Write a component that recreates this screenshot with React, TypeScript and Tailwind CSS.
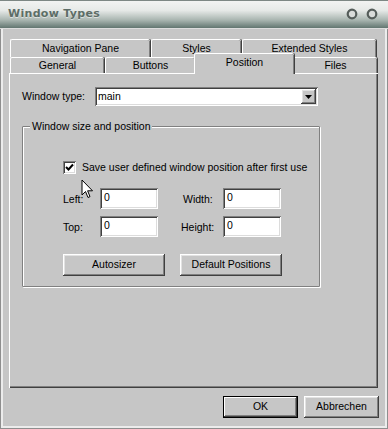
import React from "react";

const raised =
  "bg-[#c6c6c6] shadow-[inset_-1px_-1px_#404040,inset_1px_1px_#ffffff,inset_-2px_-2px_#808080,inset_2px_2px_#e2e2e2]";
const sunken =
  "bg-white shadow-[inset_1px_1px_#808080,inset_-1px_-1px_#ffffff,inset_2px_2px_#404040,inset_-2px_-2px_#dcdcdc]";

function Tab(props: { label: string; w: number; selected?: boolean }) {
  if (props.selected) {
    return (
      <div
        className="relative z-10 -mx-[2px] mb-[-1px] flex h-[21px] items-center justify-center rounded-t-[2px] border-t border-l border-white bg-[#c6c6c6] pb-[2px] shadow-[inset_-1px_0_#808080,1px_0_#404040]"
        style={{ width: props.w + 4 }}
      >
        {props.label}
      </div>
    );
  }
  return (
    <div
      className="flex h-full items-center justify-center rounded-t-[2px] border-t border-l border-white bg-[#c6c6c6] shadow-[inset_-1px_0_#808080,1px_0_#404040]"
      style={{ width: props.w - 1, marginRight: 1 }}
    >
      {props.label}
    </div>
  );
}

function Field(props: { label: string; labelW: number }) {
  return (
    <div className="flex h-[21px] items-center">
      <span className="pt-[2px]" style={{ width: props.labelW }}>
        {props.label}
      </span>
      <div className={`${sunken} h-[21px] w-[58px] pl-[4px] pt-[2px] leading-[14px]`}>0</div>
    </div>
  );
}

function Cursor() {
  return (
    <svg className="absolute left-[81px] top-[179px]" width="13" height="20" viewBox="0 0 13 20">
      <path
        d="M1 1 L1 16 L4.5 12.5 L7 18.5 L9 17.6 L6.6 11.8 L11.5 11.8 Z"
        fill="#ffffff"
        stroke="#000000"
        strokeWidth="1"
        strokeLinejoin="miter"
      />
    </svg>
  );
}

export default function App() {
  return (
    <div className="relative h-[429px] w-[388px] overflow-hidden bg-[#c6c6c6] font-['Liberation_Sans',Arial,sans-serif] text-[10.5px] text-black shadow-[inset_1px_0_#8e8e8e,inset_-1px_-1px_#8e8e8e,inset_3px_0_#ececec,inset_-3px_-3px_#ececec]">
      {/* title bar */}
      <div className="flex h-[28px] items-center justify-between border-t border-[#7d8784] bg-[linear-gradient(to_bottom,#f2f3f2_0%,#e6e9e7_35%,#aab6b1_70%,#627670_100%)] pl-[8px] pr-[10px]">
        <span className="font-['DejaVu_Sans',Verdana,sans-serif] text-[11px] font-bold tracking-[0.3px] text-[#5d6d67] [text-shadow:0_1px_0_rgba(255,255,255,0.5)]">
          Window Types
        </span>
        <div className="flex gap-[8px] pb-[2px]">
          {[0, 1].map((i) => (
            <svg key={i} width="12" height="12" viewBox="0 0 12 12">
              <circle cx="6" cy="6" r="4.3" fill="#d9dcda" stroke="#555d5a" strokeWidth="2.2" />
            </svg>
          ))}
        </div>
      </div>
      <div className="h-[1px] bg-[#dcdcdc]" />

      {/* tabs */}
      <div className="ml-[10px] mt-[10px] w-[368px]">
        <div className="flex h-[18px]">
          <Tab label="Navigation Pane" w={141} />
          <Tab label="Styles" w={91} />
          <Tab label="Extended Styles" w={135} />
        </div>
        <div className="flex h-[16px] items-end">
          <Tab label="General" w={95} />
          <Tab label="Buttons" w={91} />
          <div className="mr-[1px]">
            <Tab label="Position" w={96} selected />
          </div>
          <Tab label="Files" w={85} />
        </div>
      </div>

      {/* panel */}
      <div className="ml-[9px] h-[315px] w-[369px] border-t border-l border-white pl-[12px] pt-[13px] shadow-[inset_-1px_-1px_#404040,inset_-2px_-2px_#808080]">
        <div className="flex h-[19px] items-center">
          <span className="w-[73px] pt-[1px]">Window type:</span>
          <div className={`${sunken} flex h-[19px] w-[223px] items-center justify-between pl-[3px] pr-[2px]`}>
            <span className="pt-[1px]">main</span>
            <div className={`${raised} flex h-[15px] w-[15px] items-center justify-center bg-[#c0c0c0]`}>
              <svg width="7" height="4" viewBox="0 0 7 4">
                <path d="M0 0 L7 0 L3.5 4 Z" fill="#000" />
              </svg>
            </div>
          </div>
        </div>

        {/* group box */}
        <div className="relative mt-[20px] h-[161px] w-[298px] rounded-[1px] border border-[#808080] pl-[40px] pt-[32px] shadow-[inset_1px_1px_#ffffff,1px_1px_#ffffff]">
          <span className="absolute -top-[8px] left-[7px] bg-[#c6c6c6] px-[2px]">Window size and position</span>

          <div className="flex h-[17px] items-center">
            <div className={`${sunken} flex h-[13px] w-[13px] items-center justify-center`}>
              <svg width="9" height="9" viewBox="0 0 9 9">
                <path d="M1 4 L3.5 6.5 L8 1.5" fill="none" stroke="#000" strokeWidth="2" />
              </svg>
            </div>
            <span className="ml-[6px]">Save user defined window position after first use</span>
          </div>

          <div className="mt-[12px] flex">
            <Field label="Left:" labelW={37} />
            <div className="ml-[25px]">
              <Field label="Width:" labelW={40} />
            </div>
          </div>
          <div className="mt-[7px] flex">
            <Field label="Top:" labelW={37} />
            <div className="ml-[23px]">
              <Field label="Height:" labelW={42} />
            </div>
          </div>

          <div className="mt-[17px] flex gap-[15px]">
            <div className={`${raised} flex h-[22px] w-[102px] items-center justify-center`}>Autosizer</div>
            <div className={`${raised} flex h-[22px] w-[102px] items-center justify-center`}>Default Positions</div>
          </div>
        </div>
      </div>

      {/* dialog buttons */}
      <div className="mt-[8px] flex justify-end gap-[6px] pr-[9px]">
        <div className="flex h-[22px] w-[75px] items-center justify-center border border-black bg-[#c6c6c6] shadow-[inset_-1px_-1px_#404040,inset_1px_1px_#ffffff,inset_-2px_-2px_#808080]">
          OK
        </div>
        <div className={`${raised} flex h-[22px] w-[75px] items-center justify-center`}>Abbrechen</div>
      </div>

      <Cursor />
    </div>
  );
}
